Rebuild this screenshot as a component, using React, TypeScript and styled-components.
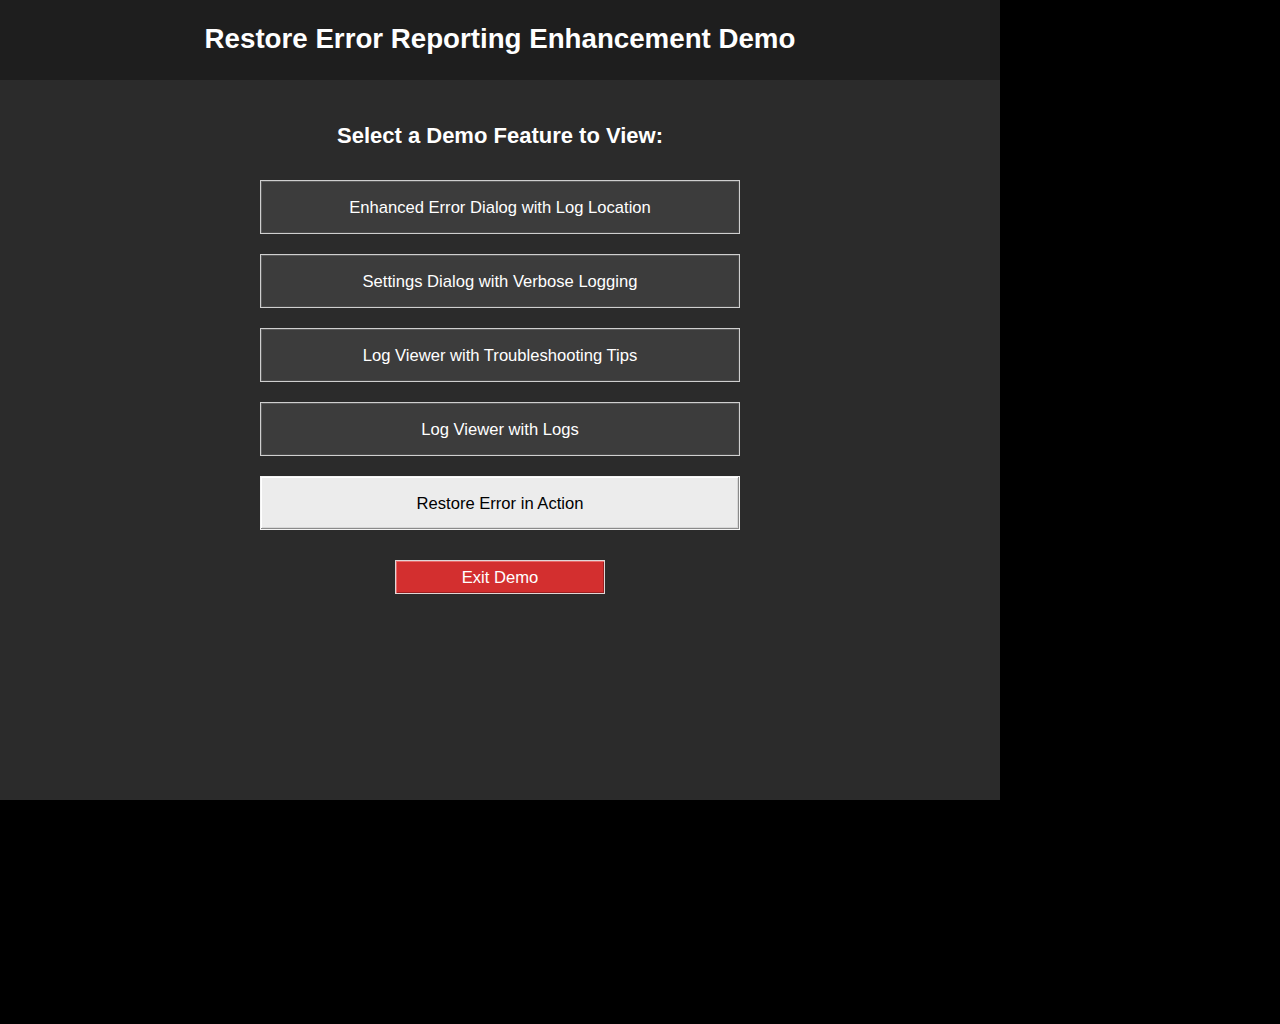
import React, { useState } from "react";
import styled, { createGlobalStyle } from "styled-components";

const Global = createGlobalStyle`
  html, body { margin: 0; padding: 0; background: #000; }
  body { font-family: "Liberation Sans", Arial, sans-serif; }
`;

const Frame = styled.div`
  width: 1000px;
  height: 800px;
  background: #2b2b2b;
  display: flex;
  flex-direction: column;
`;

const Header = styled.header`
  height: 80px;
  background: #1e1e1e;
  display: flex;
  align-items: center;
  justify-content: center;
`;

const Title = styled.h1`
  margin: 0;
  font-size: 27.7px;
  font-weight: bold;
  color: #ffffff;
  line-height: 32px;
  transform: translateY(-1px);
`;

const Content = styled.main`
  display: flex;
  flex-direction: column;
  align-items: center;
  padding-top: 40px;
`;

const Subtitle = styled.h2`
  margin: 0 0 30px;
  font-size: 22px;
  font-weight: bold;
  color: #ffffff;
  line-height: 30px;
  height: 30px;
  padding-top: 1px;
  box-sizing: border-box;
`;

const List = styled.div`
  display: flex;
  flex-direction: column;
  gap: 20px;
`;

const FeatureButton = styled.button<{ $active?: boolean }>`
  width: 480px;
  height: 54px;
  box-sizing: border-box;
  font-family: "Liberation Sans", Arial, sans-serif;
  font-size: 16.6px;
  cursor: pointer;
  padding: 2px 0 0;
  background: ${(p) => (p.$active ? "#ececec" : "#3c3c3c")};
  color: ${(p) => (p.$active ? "#000000" : "#ffffff")};
  border: 1px solid ${(p) => (p.$active ? "#f4f4f4" : "#cfcfcf")};
  box-shadow: ${(p) =>
    p.$active
      ? "inset -1px -1px 0 #8a8a8a, inset 1px 1px 0 #ffffff, inset -2px -2px 0 #d8d8d8"
      : "inset 1px 1px 0 #5a5a5a, inset -1px -1px 0 #4a4a4a"};
`;

const ExitButton = styled.button`
  margin-top: 30px;
  width: 210px;
  height: 34px;
  box-sizing: border-box;
  font-family: "Liberation Sans", Arial, sans-serif;
  font-size: 16.6px;
  color: #ffffff;
  background: #d32f2f;
  border: 1px solid #e0d6d6;
  box-shadow: inset 1px 1px 0 #e96a6a, inset -1px -1px 0 #9b1f1f;
  padding: 2px 0 0;
  cursor: pointer;
`;

const features = [
  "Enhanced Error Dialog with Log Location",
  "Settings Dialog with Verbose Logging",
  "Log Viewer with Troubleshooting Tips",
  "Log Viewer with Logs",
  "Restore Error in Action",
];

export default function App() {
  const [active, setActive] = useState(4);
  return (
    <>
      <Global />
      <Frame>
        <Header>
          <Title>Restore Error Reporting Enhancement Demo</Title>
        </Header>
        <Content>
          <Subtitle>Select a Demo Feature to View:</Subtitle>
          <List>
            {features.map((f, i) => (
              <FeatureButton key={f} $active={i === active} onClick={() => setActive(i)}>
                {f}
              </FeatureButton>
            ))}
          </List>
          <ExitButton>Exit Demo</ExitButton>
        </Content>
      </Frame>
    </>
  );
}
